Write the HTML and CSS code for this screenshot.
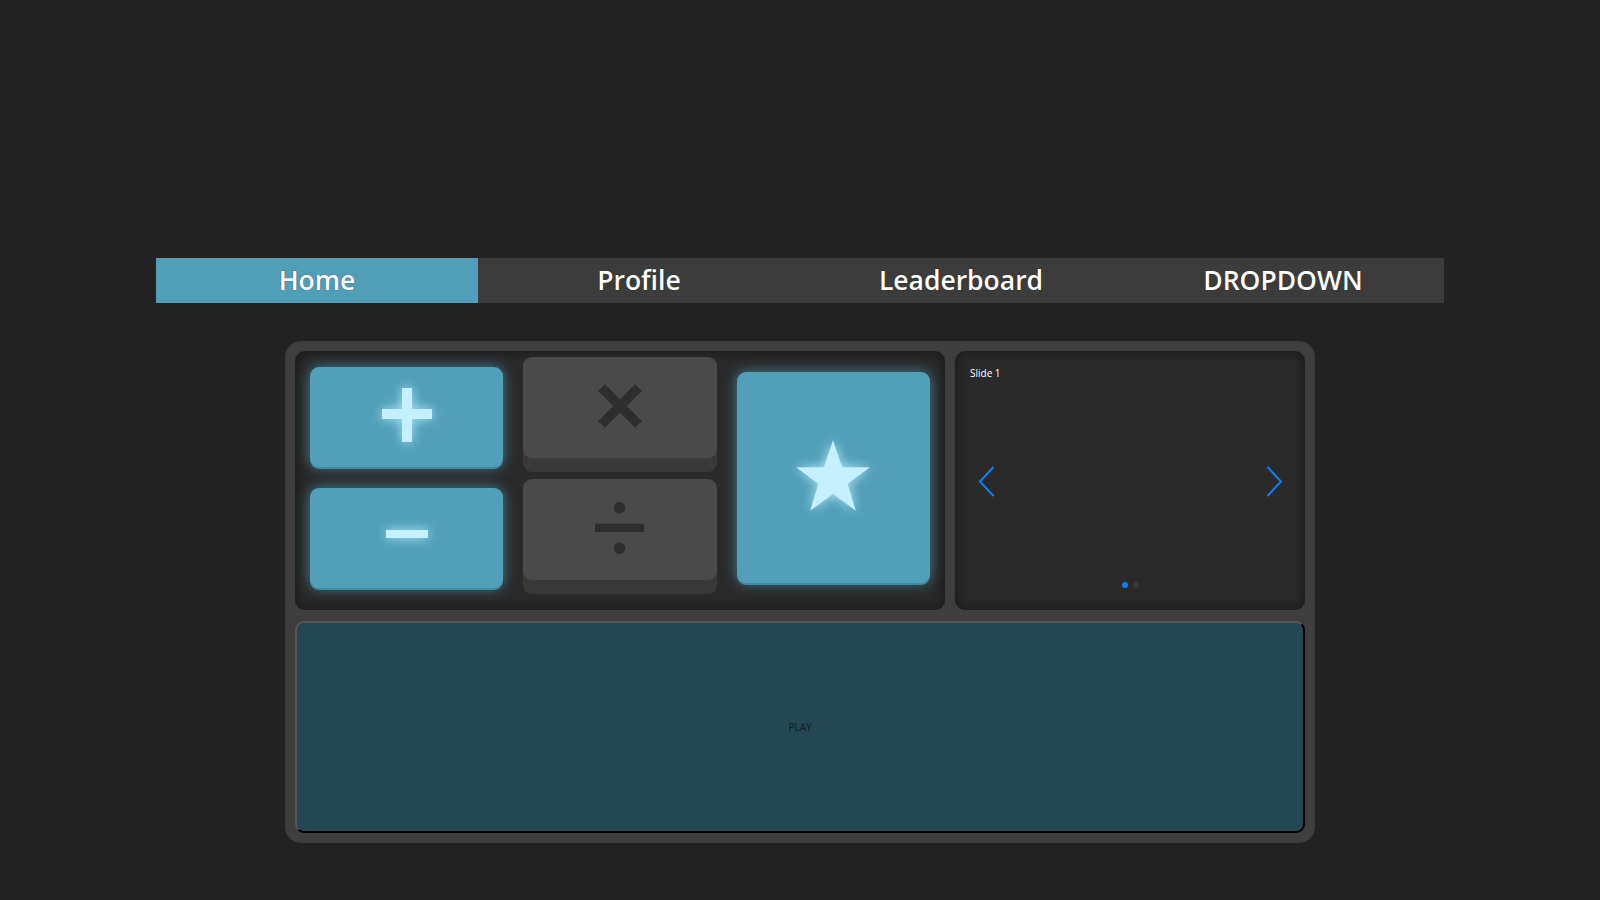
FILE: index.html
```html
<!DOCTYPE html>
<html lang="en">
<head>
<meta charset="utf-8">
<title>Math Game</title>
<link rel="stylesheet" href="styles.css">
</head>
<body>
<nav class="nav">
  <a class="tab tab-active">Home</a>
  <a class="tab">Profile</a>
  <a class="tab">Leaderboard</a>
  <a class="tab">DROPDOWN</a>
</nav>
<main class="card">
  <div class="top-row">
    <section class="pad">
      <div class="col">
        <button class="key key-on key-plus">
          <svg class="glyph" width="50" height="54" viewBox="0 0 50 54"><rect x="20" y="0" width="10" height="54"/><rect x="0" y="21" width="50" height="10"/></svg>
        </button>
        <button class="key key-on key-minus">
          <svg class="glyph" width="42" height="8" viewBox="0 0 42 8"><rect x="0" y="0" width="42" height="8"/></svg>
        </button>
      </div>
      <div class="col">
        <button class="key key-off key-times">
          <svg class="glyph-dark" width="44" height="44" viewBox="0 0 44 44"><path d="M3.5 3.5 L40.5 40.5 M40.5 3.5 L3.5 40.5" stroke="#2e2e2e" stroke-width="9.5" fill="none"/></svg>
        </button>
        <button class="key key-off key-divide">
          <svg class="glyph-dark" width="49" height="52" viewBox="0 0 49 52"><circle cx="24.5" cy="5.7" r="5.7"/><rect x="0" y="21.7" width="49" height="8.3"/><circle cx="24.5" cy="46.3" r="5.7"/></svg>
        </button>
      </div>
      <div class="col">
        <button class="key key-on key-star">
          <svg class="glyph" width="74" height="71" viewBox="0 0 95.2 90.5"><polygon points="47.6,0 59.4,34.5 95.2,34.5 66.4,55.9 77,90.5 47.6,69.1 18.2,90.5 28.8,55.9 0,34.5 35.8,34.5"/></svg>
        </button>
      </div>
    </section>
    <section class="carousel">
      <div class="slide-label">Slide 1</div>
      <div class="slide-body">
        <svg class="chev" width="17" height="31" viewBox="0 0 17 31"><path d="M15.5 1 L2 15.5 L15.5 30" fill="none" stroke="#0d7ef5" stroke-width="2"/></svg>
        <svg class="chev" width="17" height="31" viewBox="0 0 17 31"><path d="M1.5 1 L15 15.5 L1.5 30" fill="none" stroke="#0d7ef5" stroke-width="2"/></svg>
      </div>
      <div class="dots"><span class="dot dot-on"></span><span class="dot"></span></div>
    </section>
  </div>
  <button class="play">PLAY</button>
</main>
</body>
</html>
```

FILE: styles.css
```css
html, body {
  margin: 0;
  padding: 0;
}
body {
  background: #222222;
  font-family: "Open Sans", "Noto Sans", sans-serif;
  height: 900px;
  overflow: hidden;
}
.nav {
  width: 1288px;
  margin: 258px auto 0;
  height: 45px;
  display: flex;
  background: #3c3c3c;
}
.tab {
  flex: 1;
  display: flex;
  align-items: center;
  justify-content: center;
  color: #ffffff;
  font-size: 26.5px;
  font-weight: 600;
  padding-bottom: 1px;
  text-shadow: 0 0 1px rgba(0,0,0,0.6);
  cursor: pointer;
}
.tab-active {
  background: #519eb9;
}
.card {
  width: 1010px;
  margin: 38px auto 0;
  padding: 10px;
  background: #3e3e3e;
  border-radius: 16px;
}
.top-row {
  display: flex;
  gap: 10px;
  height: 259px;
}
.pad {
  width: 650px;
  box-sizing: border-box;
  padding: 6px 15px 30px;
  display: flex;
  gap: 20px;
  align-items: center;
  background: #2a2a2a;
  border-radius: 10px;
  box-shadow: inset 0 0 14px rgba(0,0,0,0.45);
}
.col {
  flex: 1;
  display: flex;
  flex-direction: column;
  gap: 21px;
}
.key {
  display: flex;
  align-items: center;
  justify-content: center;
  border: none;
  padding: 0;
  margin: 0;
  height: 101px;
  border-radius: 9px;
  cursor: pointer;
}
.key-off {
  background: #4a4a4a;
  box-shadow: 0 14px 0 #393939;
}
.key-on {
  background: #529fba;
  transform: translateY(9px);
  box-shadow: 0 2px 0 #3f8aa4, 0 0 14px rgba(90,185,220,0.6);
}
.key-plus {
  height: 100px;
}
.key-minus {
  height: 100px;
}
.key-plus .glyph { margin-top: -4px; }
.key-minus .glyph { margin-top: -8px; }
.key-times .glyph-dark { margin-top: -4px; }
.key-divide .glyph-dark { margin-top: -4px; }
.key-star {
  height: 211px;
}
.key-star .glyph { margin-top: -4px; }
.glyph {
  fill: #c4f0ff;
  filter: drop-shadow(0 0 6px rgba(190,240,255,0.9));
}
.glyph-dark {
  fill: #2e2e2e;
}
.carousel {
  flex: 1;
  box-sizing: border-box;
  background: #2a2a2a;
  border-radius: 10px;
  box-shadow: inset 0 0 14px rgba(0,0,0,0.45);
  padding: 15px 22px 20px 15px;
  display: flex;
  flex-direction: column;
}
.slide-label {
  color: #ffffff;
  font-size: 10px;
  line-height: 14px;
}
.slide-body {
  flex: 1;
  display: flex;
  align-items: center;
  justify-content: space-between;
  padding: 0 0 0 8px;
  margin-top: 0;
}
.dots {
  display: flex;
  justify-content: center;
  gap: 5px;
  padding-left: 7px;
  height: 8px;
}
.dot {
  width: 6px;
  height: 6px;
  border-radius: 50%;
  background: #3a3a3a;
}
.dot-on {
  background: #0d7ef5;
}
.play {
  display: block;
  width: 100%;
  height: 212px;
  margin-top: 11px;
  background: #244754;
  border-style: solid;
  border-width: 2px;
  border-color: #555555 #000000 #000000 #555555;
  border-radius: 9px;
  color: #111c21;
  font-family: "Open Sans", "Noto Sans", sans-serif;
  font-size: 10px;
  padding: 0;
  cursor: pointer;
}
```
